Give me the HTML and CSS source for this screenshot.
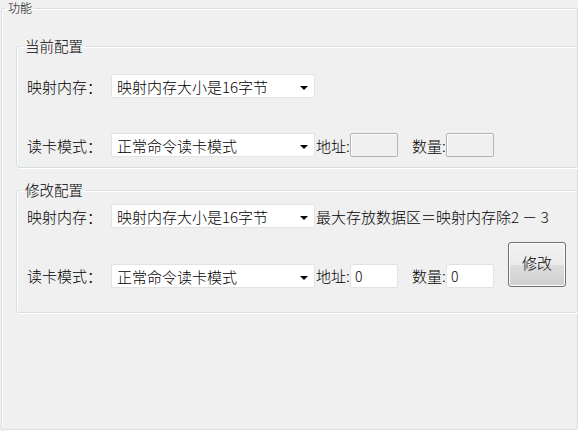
FILE: index.html
```html
<!DOCTYPE html>
<html lang="zh">
<head>
<meta charset="utf-8">
<link rel="stylesheet" href="styles.css">
</head>
<body>
<fieldset class="group outer">
  <legend class="outer-title">功能</legend>
  <fieldset class="group inner first">
    <legend class="inner-title">当前配置</legend>
    <div class="content">
      <div class="row row-mem">
        <span class="label">映射内存：</span>
        <div class="combo"><span>映射内存大小是16字节</span><span class="arrow"></span></div>
      </div>
      <div class="row row-mode">
        <span class="label">读卡模式：</span>
        <div class="combo"><span>正常命令读卡模式</span><span class="arrow"></span></div>
        <span class="field-label">地址:</span>
        <div class="edit disabled"></div>
        <span class="field-label gap">数量:</span>
        <div class="edit disabled"></div>
      </div>
    </div>
  </fieldset>
  <fieldset class="group inner second">
    <legend class="inner-title">修改配置</legend>
    <div class="content content-2">
      <div class="row row-mem2">
        <span class="label">映射内存：</span>
        <div class="combo"><span>映射内存大小是16字节</span><span class="arrow"></span></div>
        <span class="note">最大存放数据区＝映射内存除2 － 3</span>
      </div>
      <div class="row row-mode2">
        <span class="label">读卡模式：</span>
        <div class="combo"><span>正常命令读卡模式</span><span class="arrow"></span></div>
        <span class="field-label">地址:</span>
        <div class="edit">0</div>
        <span class="field-label gap">数量:</span>
        <div class="edit">0</div>
        <button class="btn">修改</button>
      </div>
    </div>
  </fieldset>
</fieldset>
</body>
</html>
```
FILE: styles.css
```css
html, body {
  margin: 0;
  padding: 0;
  background: #f0f0f0;
  overflow: hidden;
}
body {
  width: 578px;
  height: 431px;
  font-family: "Noto Sans CJK SC", "Liberation Sans", sans-serif;
  font-weight: 300;
  color: #000;
}
.group {
  border: 1px solid #d5dfe5;
  border-radius: 3px;
  box-shadow: inset 1px 1px 0 #fff, 1px 1px 0 #fff;
  padding: 0;
  min-width: 0;
  box-sizing: border-box;
}
.outer {
  margin: 0 0 0 1px;
  width: 577px;
  height: 430px;
}
.outer-title {
  font-size: 12px;
  line-height: 16px;
  margin-left: 3px;
  padding: 0 3px;
}
.inner {
  margin: 0 0 0 14px;
  width: 562px;
}
.first { margin-top: 21px; }
.second { margin-top: 13px; }
.inner-title {
  font-size: 14.5px;
  line-height: 18px;
  margin-left: 5px;
  padding: 0 3px;
}
.content {
  padding: 0 0 10px 10px;
}
.content-2 {
  padding-bottom: 24px;
}
.row {
  display: flex;
  align-items: center;
  height: 24px;
  font-size: 15px;
}
.row-mem { margin-top: 19px; }
.row-mode { margin-top: 35px; }
.row-mem2 { margin-top: 5px; }
.row-mode2 {
  margin-top: 14px;
  height: 46px;
  align-items: flex-end;
}
.row-mode2 > .label,
.row-mode2 > .field-label {
  align-self: flex-end;
  line-height: 24px;
}
.label {
  width: 84px;
  flex: none;
  white-space: nowrap;
}
.combo {
  flex: none;
  box-sizing: border-box;
  width: 204px;
  height: 24px;
  background: #fff;
  border: 1px solid #e3e3e3;
  border-radius: 2px;
  display: flex;
  align-items: center;
  justify-content: space-between;
  padding: 0 6px 0 5px;
  white-space: nowrap;
}
.arrow {
  width: 0;
  height: 0;
  border-left: 4px solid transparent;
  border-right: 4px solid transparent;
  border-top: 4px solid #000;
  margin-top: 3px;
}
.field-label {
  flex: none;
  width: 35px;
  padding-left: 1px;
  box-sizing: border-box;
  white-space: nowrap;
}
.field-label.gap { margin-left: 13px; }
.edit {
  flex: none;
  box-sizing: border-box;
  width: 48px;
  height: 24px;
  background: #fff;
  border: 1px solid #e3e3e3;
  border-radius: 2px;
  padding-left: 4px;
  font-size: 14px;
  line-height: 22px;
}
.edit.disabled {
  background: #f0f0f0;
  border-color: #b4b4b4;
  box-shadow: inset 1px 1px 0 #fff;
}
.note {
  margin-left: 1px;
  white-space: nowrap;
}
.btn {
  flex: none;
  box-sizing: border-box;
  width: 58px;
  height: 45px;
  margin: 0 0 1px 14px;
  border: 1px solid #707070;
  border-radius: 3px;
  background: linear-gradient(#f2f2f2 0%, #ebebeb 50%, #dddddd 51%, #cfcfcf 100%);
  box-shadow: inset 0 0 0 1px #fcfcfc;
  font-family: "Noto Sans CJK SC", sans-serif;
  font-weight: 300;
  font-size: 15px;
  color: #000;
  padding: 0 0 4px 0;
}
```
